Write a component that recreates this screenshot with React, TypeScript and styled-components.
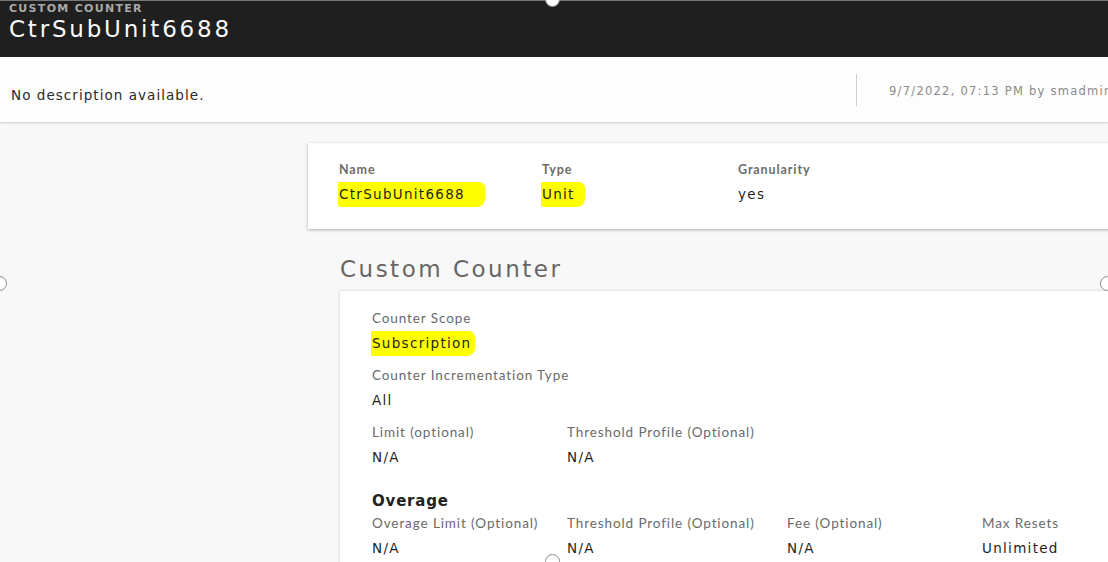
import styled, { createGlobalStyle } from "styled-components";

const GlobalStyle = createGlobalStyle`
  html, body {
    margin: 0;
    padding: 0;
    background: #f8f8f8;
    overflow: hidden;
  }
  body {
    font-family: Lato, "Noto Sans", sans-serif;
  }
`;

type Field = { label: string; value: string; tail?: number };

const summary: Field[] = [
  { label: "Name", value: "CtrSubUnit6688", tail: 20 },
  { label: "Type", value: "Unit", tail: 10 },
  { label: "Granularity", value: "yes" },
];

const limits: Field[] = [
  { label: "Limit (optional)", value: "N/A" },
  { label: "Threshold Profile (Optional)", value: "N/A" },
];

const overage: Field[] = [
  { label: "Overage Limit (Optional)", value: "N/A" },
  { label: "Threshold Profile (Optional)", value: "N/A" },
  { label: "Fee (Optional)", value: "N/A" },
  { label: "Max Resets", value: "Unlimited" },
];

export default function App() {
  return (
    <Page>
      <GlobalStyle />
      <TopBar>
        <Eyebrow>CUSTOM COUNTER</Eyebrow>
        <Title>CtrSubUnit6688</Title>
      </TopBar>
      <DescBar>
        <Desc>No description available.</Desc>
        <Divider />
        <Meta>9/7/2022, 07:13 PM by smadmin</Meta>
      </DescBar>

      <Main>
        <SummaryCard>
          {summary.map((f) => (
            <SummaryCol key={f.label}>
              <SummaryLabel>{f.label}</SummaryLabel>
              <Value>
                {f.tail ? <Mark $tail={f.tail}>{f.value}</Mark> : f.value}
              </Value>
            </SummaryCol>
          ))}
        </SummaryCard>

        <Section>
          <SectionTitle>Custom Counter</SectionTitle>
          <DetailCard>
            <Item>
              <Label>Counter Scope</Label>
              <Value>
                <Mark $tail={4}>Subscription</Mark>
              </Value>
            </Item>
            <Item>
              <Label>Counter Incrementation Type</Label>
              <Value>All</Value>
            </Item>
            <Row>
              {limits.map((f, i) => (
                <Cell key={i} $w={i === 0 ? 195 : 220}>
                  <Label>{f.label}</Label>
                  <Value>{f.value}</Value>
                </Cell>
              ))}
            </Row>
            <SubHead>Overage</SubHead>
            <Row>
              {overage.map((f, i) => (
                <Cell key={i} $w={i === 1 ? 220 : 195}>
                  <Label>{f.label}</Label>
                  <Value>{f.value}</Value>
                </Cell>
              ))}
            </Row>
          </DetailCard>
        </Section>
      </Main>

      <Handle style={{ left: 545, top: -8 }} />
      <Handle style={{ left: -8, top: 276 }} />
      <Handle style={{ left: 1100, top: 276 }} />
      <Handle style={{ left: 545, top: 554 }} />
    </Page>
  );
}

const Page = styled.div`
  position: relative;
  width: 1108px;
  height: 562px;
  overflow: hidden;
  background: #f8f8f8;
`;

const TopBar = styled.div`
  height: 57px;
  background: #1f1f1f;
  padding: 1px 9px 0;
  box-sizing: border-box;
  border-top: 1px solid #777;
`;

const Eyebrow = styled.div`
  font-family: "DejaVu Sans", sans-serif;
  font-size: 11px;
  font-weight: bold;
  color: #a9a9a9;
  letter-spacing: 1.3px;
  line-height: 13px;
`;

const Title = styled.div`
  font-family: "DejaVu Sans", sans-serif;
  font-size: 23px;
  color: #fafafa;
  letter-spacing: 2.8px;
  line-height: 28px;
`;

const DescBar = styled.div`
  height: 65px;
  background: #fdfdfd;
  display: flex;
  align-items: center;
  border-bottom: 1px solid #dcdcdc;
  box-shadow: 0 1px 2px rgba(0, 0, 0, 0.08);
  padding-left: 11px;
  white-space: nowrap;
`;

const Desc = styled.div`
  font-family: "DejaVu Sans", sans-serif;
  font-size: 13.5px;
  color: #2a2a2a;
  letter-spacing: 1.05px;
  width: 845px;
  flex-shrink: 0;
  margin-top: 10px;
`;

const Divider = styled.div`
  width: 1px;
  height: 32px;
  flex-shrink: 0;
  background: #cfcfcf;
  margin-right: 32px;
`;

const Meta = styled.div`
  font-family: "DejaVu Sans", sans-serif;
  font-size: 11.5px;
  color: #8a8a8a;
  letter-spacing: 1.25px;
  flex-shrink: 0;
  margin-top: 2px;
`;

const Main = styled.div`
  padding: 20px 0 0 308px;
`;

const SummaryCard = styled.div`
  width: 900px;
  height: 86px;
  background: #fff;
  box-shadow: 0 1px 3px rgba(0, 0, 0, 0.3);
  display: flex;
  padding: 19px 0 0 31px;
  box-sizing: border-box;
`;

const SummaryCol = styled.div`
  width: 203px;
  &:nth-child(2) {
    width: 196px;
  }
`;

const SummaryLabel = styled.div`
  font-family: Lato, sans-serif;
  font-size: 12.5px;
  font-weight: bold;
  color: #6c6c6c;
  letter-spacing: 0.9px;
  line-height: 15px;
  margin-bottom: 9px;
`;

const Value = styled.div`
  font-family: "DejaVu Sans", sans-serif;
  font-size: 13.5px;
  color: #1f1f1f;
  letter-spacing: 1.3px;
  line-height: 16px;
`;

const Mark = styled.span<{ $tail: number }>`
  background: #ffff00;
  padding: 4px ${(p) => p.$tail}px 5px 1px;
  margin-left: -1px;
  border-radius: 1px 6px 8px 2px;
`;

const Section = styled.div`
  padding: 27px 0 0 32px;
`;

const SectionTitle = styled.div`
  font-family: "DejaVu Sans", sans-serif;
  font-size: 23px;
  color: #666;
  letter-spacing: 2.5px;
  line-height: 26px;
  margin-bottom: 9px;
`;

const DetailCard = styled.div`
  width: 900px;
  height: 300px;
  background: #fff;
  box-shadow: 0 0 3px rgba(0, 0, 0, 0.18);
  padding: 19px 0 0 32px;
  box-sizing: border-box;
`;

const Item = styled.div`
  margin-bottom: 16px;
`;

const Label = styled.div`
  font-family: Lato, sans-serif;
  font-size: 13.5px;
  color: #6a6a6a;
  letter-spacing: 0.9px;
  line-height: 16px;
  margin-bottom: 9px;
  white-space: nowrap;
`;

const Row = styled.div`
  display: flex;
`;

const Cell = styled.div<{ $w: number }>`
  width: ${(p) => p.$w}px;
`;

const SubHead = styled.div`
  font-family: "DejaVu Sans", sans-serif;
  font-size: 15px;
  font-weight: bold;
  color: #222;
  letter-spacing: 0.8px;
  margin-top: 27px;
  line-height: 18px;
  margin-bottom: 5px;
`;

const Handle = styled.div`
  position: absolute;
  width: 13px;
  height: 13px;
  border-radius: 50%;
  background: #fff;
  border: 1.5px solid #8a8a8a;
`;
